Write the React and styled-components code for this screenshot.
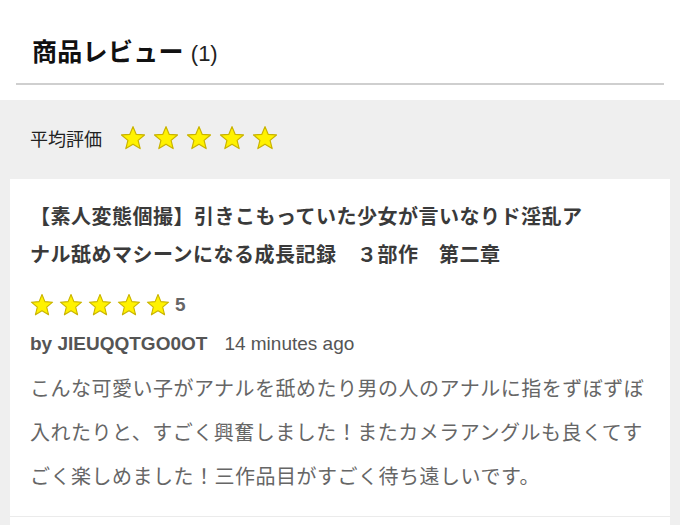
import React from "react";
import styled, { createGlobalStyle } from "styled-components";

const Global = createGlobalStyle`
  html, body { margin: 0; padding: 0; background: #fff; }
  body { font-family: "Liberation Sans", "Noto Sans CJK JP", sans-serif; }
`;

const Page = styled.div`
  width: 680px;
  min-height: 525px;
  background: #fff;
  overflow: hidden;
`;

const Header = styled.div`
  margin: 0 16px;
  padding: 32px 0 11px 16px;
  border-bottom: 2px solid #cfcfcf;
  display: flex;
  align-items: baseline;
  gap: 7px;
  line-height: 36px;
`;

const HeaderTitle = styled.h1`
  margin: 0;
  font-family: "Noto Sans CJK JP", sans-serif;
  font-size: 25px;
  font-weight: 700;
  color: #111;
  letter-spacing: 0.3px;
`;

const Count = styled.span`
  font-family: "Liberation Sans", sans-serif;
  font-size: 22px;
  color: #222;
`;

const Section = styled.div`
  margin-top: 15px;
  background: #efefef;
  padding: 18px 10px 0;
  min-height: 410px;
`;

const AverageRow = styled.div`
  display: flex;
  align-items: center;
  height: 40px;
  padding-left: 20px;
  gap: 18px;
  margin-bottom: 21px;
`;

const AverageLabel = styled.span`
  font-family: "Noto Sans CJK JP", sans-serif;
  font-size: 18px;
  color: #222;
`;

const Stars = styled.div`
  display: flex;
  align-items: center;
  gap: ${(p) => p.$gap}px;
`;

const Card = styled.div`
  background: #fff;
  min-height: 360px;
`;

const Review = styled.div`
  padding: 18px 20px 18px 20px;
  border-bottom: 1px solid #ebebeb;
`;

const Title = styled.h2`
  margin: 0;
  max-width: 565px;
  font-family: "Noto Sans CJK JP", sans-serif;
  font-size: 20px;
  font-weight: 700;
  line-height: 38px;
  letter-spacing: 0.5px;
  color: #3a3a3a;
`;

const RatingRow = styled.div`
  display: flex;
  align-items: center;
  height: 24px;
  margin-top: 20px;
  gap: 5px;
`;

const RatingNumber = styled.span`
  font-family: "Liberation Sans", sans-serif;
  font-size: 19px;
  font-weight: 700;
  color: #666;
`;

const Byline = styled.div`
  margin-top: 14px;
  line-height: 26px;
  font-family: "Liberation Sans", sans-serif;
  font-size: 19px;
  color: #555;
  display: flex;
  gap: 17px;
`;

const Author = styled.span`
  font-weight: 700;
`;

const Body = styled.p`
  margin: 9px 0 0;
  font-family: "Noto Sans CJK JP", sans-serif;
  font-size: 20px;
  line-height: 44px;
  letter-spacing: 0.5px;
  color: #666;
`;

const Star = ({ size }) => (
  <svg width={size} height={size} viewBox="0 0 24 24">
    <polygon
      points="12,1.5 14.9,8.6 22.6,9.2 16.7,14.2 18.6,21.8 12,17.7 5.4,21.8 7.3,14.2 1.4,9.2 9.1,8.6"
      fill="#fff200"
      stroke="#c9b300"
      strokeWidth="1.1"
      strokeLinejoin="round"
    />
  </svg>
);

const StarSet = ({ size, gap }) => (
  <Stars $gap={gap}>
    {[0, 1, 2, 3, 4].map((i) => (
      <Star key={i} size={size} />
    ))}
  </Stars>
);

export default function App() {
  return (
    <Page>
      <Global />
      <Header>
        <HeaderTitle>商品レビュー</HeaderTitle>
        <Count>(1)</Count>
      </Header>
      <Section>
        <AverageRow>
          <AverageLabel>平均評価</AverageLabel>
          <StarSet size={26} gap={7} />
        </AverageRow>
        <Card>
          <Review>
            <Title>
              【素人変態個撮】引きこもっていた少女が言いなりド淫乱アナル舐めマシーンになる成長記録　３部作　第二章
            </Title>
            <RatingRow>
              <StarSet size={24} gap={5} />
              <RatingNumber>5</RatingNumber>
            </RatingRow>
            <Byline>
              <Author>by JIEUQQTGO0OT</Author>
              <span>14 minutes ago</span>
            </Byline>
            <Body>
              こんな可愛い子がアナルを舐めたり男の人のアナルに指をずぼずぼ入れたりと、すごく興奮しました！またカメラアングルも良くてすごく楽しめました！三作品目がすごく待ち遠しいです。
            </Body>
          </Review>
        </Card>
      </Section>
    </Page>
  );
}
